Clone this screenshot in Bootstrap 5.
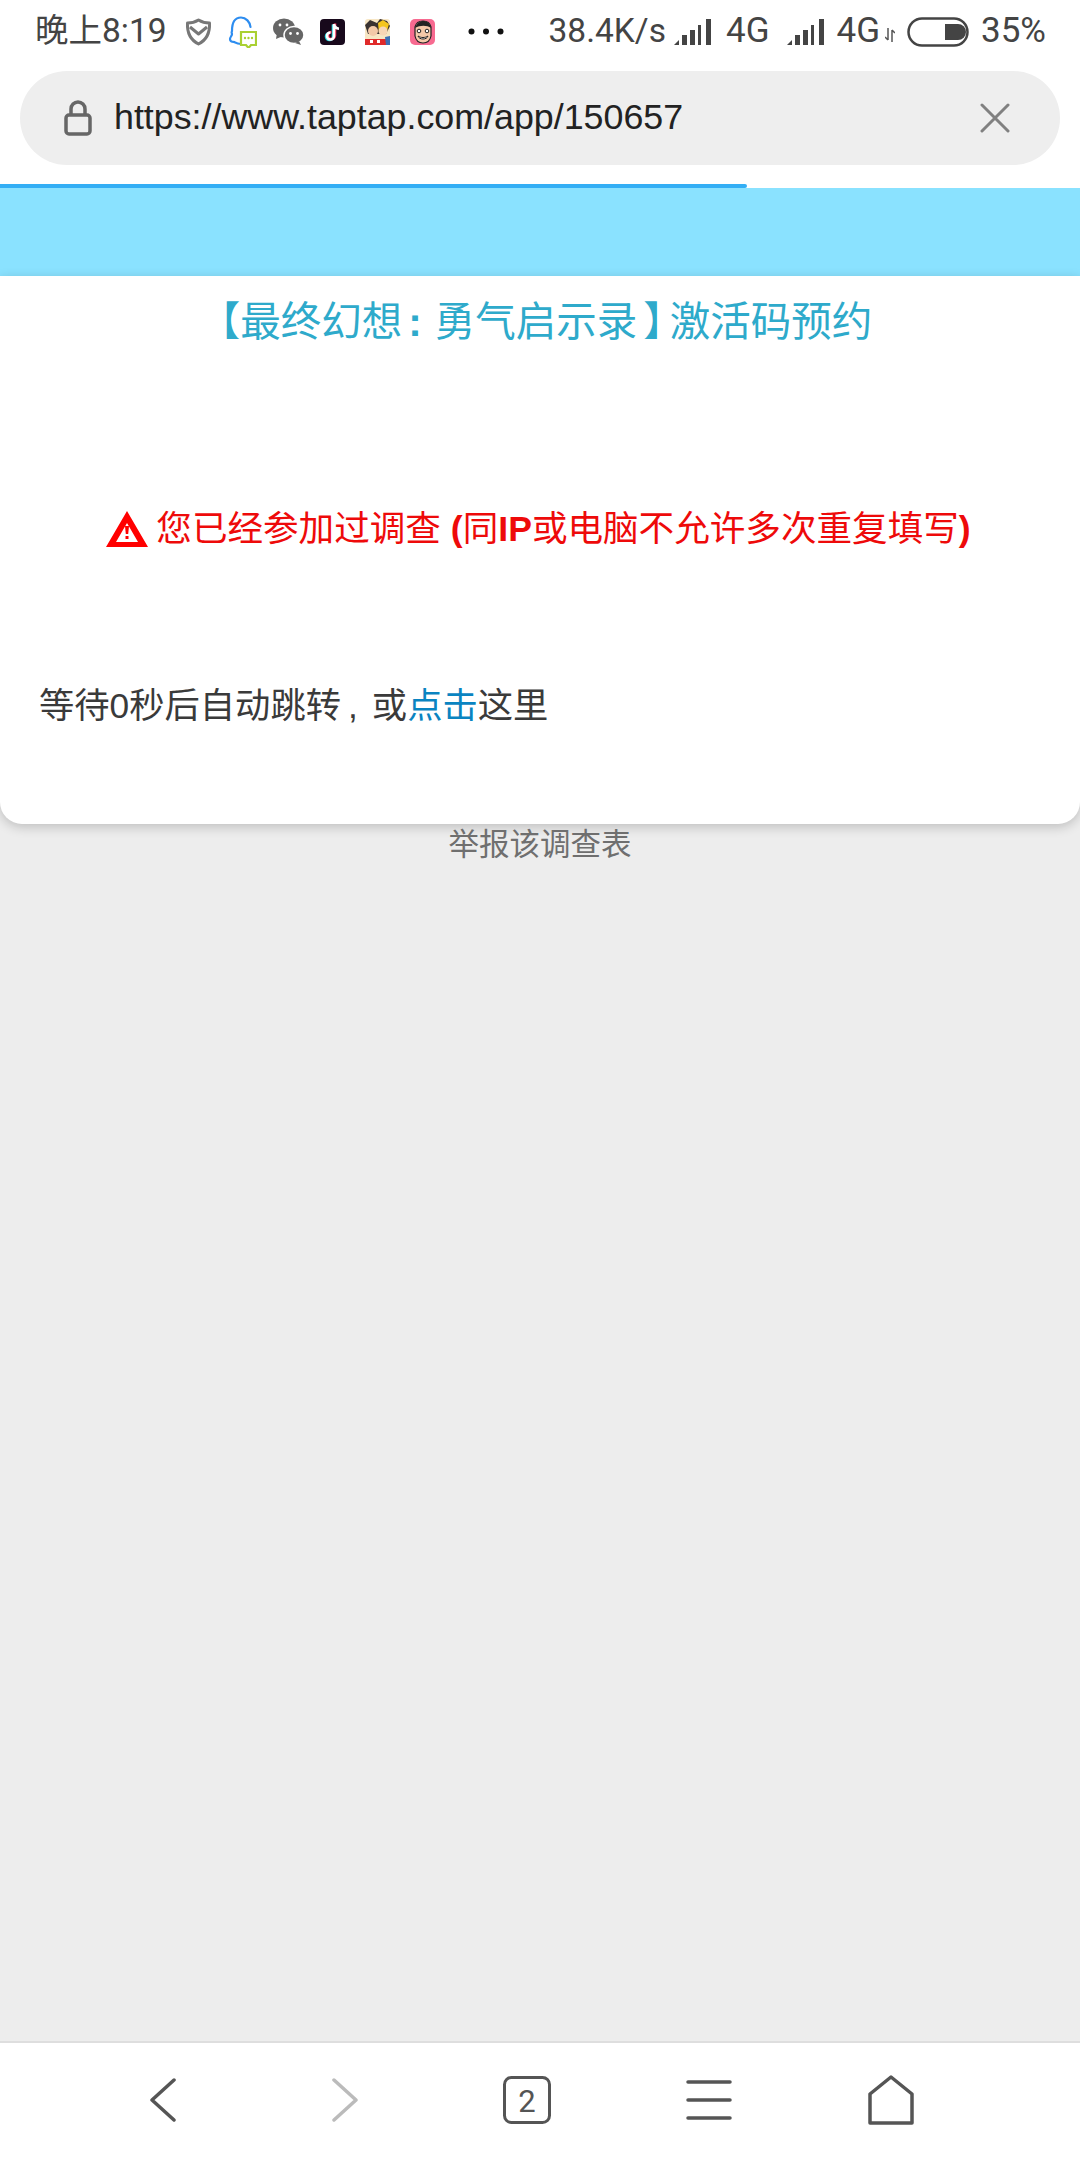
<!DOCTYPE html>
<html lang="zh-CN">
	<head>
		<meta charset="UTF-8" />
		<meta name="viewport" content="width=device-width, initial-scale=1.0" />
		<title>激活码预约</title>
		<link href="https://cdn.jsdelivr.net/npm/bootstrap@5.3.0/dist/css/bootstrap.min.css" rel="stylesheet" />
		<style>
			body {
				margin: 0;
				height: 2160px;
				background: #ededed;
				font-family: "Liberation Sans", "Noto Sans CJK SC", sans-serif;
			}
			.phone-page {
				height: 2160px;
			}
			.status-strip {
				height: 63px;
				padding: 0 34px 0 35px;
				background: #fff;
				color: #444;
				font-family: Roboto, "Noto Sans CJK SC", sans-serif;
				font-size: 33.5px;
				white-space: nowrap;
			}
			.status-left {
				gap: 16px;
			}
			.status-time {
				margin-right: 2px;
			}
			.status-dots {
				margin-left: 17px;
			}
			.status-right {
				font-size: 35px;
			}
			.status-speed {
				margin-right: 8px;
				font-size: 33.5px;
			}
			.status-signal {
				margin-right: 14px;
			}
			.status-signal-2 {
				margin: 0 12px 0 17px;
			}
			.status-net {
				margin: 0 12px 16px 5px;
			}
			.status-batt {
				margin-right: 12px;
			}
			.url-wrap {
				height: 121px;
				padding: 8px 20px 0;
				background: #fff;
			}
			.url-pill {
				height: 94px;
				padding: 0 50px 0 44px;
				border-radius: 47px;
				background: #eee;
				color: #222;
				font-size: 35.8px;
			}
			.url-text {
				margin-left: 22px;
			}
			.load-track {
				height: 4px;
				background: #fff;
			}
			.load-fill {
				width: 747px;
				height: 4px;
				background: #33aef5;
				border-radius: 0 2px 2px 0;
			}
			.sky-band {
				height: 88px;
				background: #8ae2ff;
			}
			.result-panel {
				height: 548px;
				padding: 20px 39px 0;
				background: #fff;
				border-radius: 0 0 22px 22px;
				box-shadow: 0 3px 12px rgba(0, 0, 0, 0.2);
			}
			.survey-title {
				height: 52px;
				margin: 0;
				padding-right: 8px;
				color: #2eaacb;
				font-size: 40.5px;
				font-weight: 400;
				line-height: 52px;
				text-align: center;
				white-space: nowrap;
			}
			.title-colon {
				margin: 0 13px 0 6px;
				font-weight: 700;
			}
			.title-close {
				margin-left: 6px;
				letter-spacing: -14px;
			}
			.warn-line {
				height: 50px;
				margin-top: 156px;
				padding-right: 3px;
				color: #ee0a0a;
				font-size: 35.6px;
				line-height: 50px;
				white-space: nowrap;
			}
			.warn-line svg {
				margin-right: 8px;
			}
			.wait-line {
				margin-top: 127px;
				color: #3a3a3a;
				font-size: 35.3px;
				line-height: 50px;
				white-space: nowrap;
			}
			.wait-line a {
				color: #0a84c1;
				text-decoration: none;
			}
			.wait-comma {
				margin: 0 14px 0 7px;
			}
			.report-line {
				color: #6f6f6f;
				font-size: 30.5px;
				line-height: 40px;
				text-align: center;
			}
			.tool-strip {
				height: 119px;
				padding: 0 98px 3px 72px;
				background: #fff;
				border-top: 2px solid #dedede;
			}
			.tool-slot {
				width: 182px;
			}
		</style>
	</head>
	<body>
		<div class="phone-page d-flex flex-column">
			<div class="status-strip d-flex align-items-center justify-content-between">
				<div class="status-left d-flex align-items-center">
					<span class="status-time">晚上8:19</span>
					<svg width="27" height="28" viewBox="0 0 27 28" fill="none" stroke="#777" stroke-width="3" stroke-linejoin="round"><path d="M13.500 2c4 2.500 8 3 11 3 .5 10-3 17-11 21C5.500 22 2 15 2.500 5c3 0 7-.5 11-3z" /><path d="M5 9l8.500 7L22 9" /></svg>
					<svg width="29" height="32" viewBox="0 0 29 32" fill="none"><path d="M6 26c-2 0-4-1-4-3 0-2 2-3 2-5 0-1-1-1 0-3C4 6 7 1.500 13 1.500 18 1.500 22 6 22.500 11" stroke="#2d8df0" stroke-width="2.200" stroke-linecap="round" /><path d="M6 26c2 1 4 2 7 2" stroke="#2d8df0" stroke-width="2.200" stroke-linecap="round" /><path d="M13 16h15v13h-5l-2.500 3-2.500-3h-5z" fill="#fff" stroke="#a9d032" stroke-width="2.200" /><circle cx="17" cy="22" r="1.200" fill="#a9d032" /><circle cx="20.500" cy="22" r="1.200" fill="#a9d032" /><circle cx="24" cy="22" r="1.200" fill="#a9d032" /></svg>
					<svg width="31" height="27" viewBox="0 0 31 27"><ellipse cx="11" cy="10" rx="11" ry="9.500" fill="#666" /><path d="M4 15l-1 6 7-3z" fill="#666" /><ellipse cx="21" cy="17" rx="10" ry="8.500" fill="#666" stroke="#fff" stroke-width="1.500" /><path d="M26 23l2 4-6-2z" fill="#666" /><circle cx="17.500" cy="15.500" r="1.400" fill="#fff" /><circle cx="24.500" cy="15.500" r="1.400" fill="#fff" /><circle cx="7" cy="7" r="1.400" fill="#fff" /><circle cx="14" cy="7" r="1.400" fill="#fff" /></svg>
					<svg width="25" height="26" viewBox="0 0 25 26"><rect width="25" height="26" rx="4" fill="#18091c" /><path d="M14 5v12a3.500 3.500 0 1 1-3.500-3.500" fill="none" stroke="#28d8e0" stroke-width="2.600" transform="translate(-1 .5)" /><path d="M14 5v12a3.500 3.500 0 1 1-3.500-3.500" fill="none" stroke="#f02a55" stroke-width="2.600" transform="translate(1 -.5)" /><path d="M14 5v12a3.500 3.500 0 1 1-3.500-3.500M14 5c.5 3 2.500 4.500 5 4.700" fill="none" stroke="#fff" stroke-width="2.600" /></svg>
					<svg class="ms-1" width="25" height="26" viewBox="0 0 25 26"><rect width="25" height="26" rx="3" fill="#f7e6c4" /><path d="M0 6l5-5 7 3 3-4 7 2 3 5-4 8H3z" fill="#3a3230" /><path d="M13 4l5-3 6 4-2 7-8 2z" fill="#f5c51e" /><circle cx="8" cy="12" r="5" fill="#f3c9a8" /><circle cx="18" cy="12" r="4.500" fill="#f8d6b6" /><path d="M0 20h25v6H0z" fill="#e02a2a" /><path d="M5 21h3v3H5zM12 21h3v3h-3z" fill="#fff" /><path d="M20 18l5-1v9h-4z" fill="#3c6fb4" /></svg>
					<svg class="ms-1" width="25" height="26" viewBox="0 0 25 26"><rect width="25" height="26" rx="5" fill="#f76a90" /><path d="M5 8c1-4 4-6 8-6s7 2 8 6v9c-1 5-4 7-8 7s-7-2-8-7z" fill="#f4c9a9" stroke="#222" stroke-width="1.200" /><path d="M5 9c2-5 5-7 8-7 4 0 7 2 8 7-4-3-11-3-16 0z" fill="#222" /><circle cx="9" cy="12" r="1.800" fill="#fff" stroke="#222" /><circle cx="17" cy="12" r="1.800" fill="#fff" stroke="#222" /><path d="M8 17c3 2 7 2 10 0-1 4-9 4-10 0z" fill="#fff" stroke="#222" /></svg>
					<svg class="status-dots" width="36" height="7" viewBox="0 0 36 7" fill="#111"><circle cx="3.500" cy="3.500" r="3" /><circle cx="18" cy="3.500" r="3" /><circle cx="32.500" cy="3.500" r="3" /></svg>
				</div>
				<div class="status-right d-flex align-items-center">
					<span class="status-speed">38.4K/s</span>
					<svg class="status-signal" width="38" height="28" viewBox="0 0 38 28" fill="#444"><path d="M0 27l5-5v5z" /><rect x="8" y="17" width="5" height="10" /><rect x="16" y="12" width="5" height="15" /><rect x="24" y="7" width="3" height="20" /><rect x="32" y="1" width="5" height="26" /></svg>
					<span>4G</span>
					<svg class="status-signal-2" width="38" height="28" viewBox="0 0 38 28" fill="#444"><path d="M0 27l5-5v5z" /><rect x="8" y="17" width="5" height="10" /><rect x="16" y="12" width="5" height="15" /><rect x="24" y="7" width="3" height="20" /><rect x="32" y="1" width="5" height="26" /></svg>
					<span>4G</span>
					<svg class="status-net align-self-end" width="10" height="14" viewBox="0 0 10 14" fill="none" stroke="#555" stroke-width="1.500"><path d="M3 0v12M0 9l3 3M7 2v12M7 2l3 3" /></svg>
					<svg class="status-batt" width="62" height="30" viewBox="0 0 62 30"><rect x="1.500" y="1.500" width="59" height="27" rx="13.500" fill="none" stroke="#444" stroke-width="2.500" /><path d="M38 7h13a8 8 0 0 1 0 16H38z" fill="#444" /></svg>
					<span>35%</span>
				</div>
			</div>

			<div class="url-wrap">
				<div class="url-pill d-flex align-items-center">
					<svg width="28" height="36" viewBox="0 0 28 36" fill="none" stroke="#666" stroke-width="3.500" stroke-linejoin="round"><path d="M7 15V9a7 7 0 0 1 14 0v6" /><rect x="2" y="15" width="24" height="19" rx="3" /></svg>
					<span class="url-text flex-grow-1">https://www.taptap.com/app/150657</span>
					<svg width="30" height="30" viewBox="0 0 30 30" stroke="#808080" stroke-width="3" stroke-linecap="round"><path d="M2 2l26 26M28 2L2 28" /></svg>
				</div>
			</div>

			<div class="load-track"><div class="load-fill"></div></div>
			<div class="sky-band"></div>

			<div class="result-panel">
				<h1 class="survey-title">【最终幻想<span class="title-colon">:</span>勇气启示录<span class="title-close">】</span>激活码预约</h1>
				<div class="warn-line d-flex align-items-center justify-content-center">
					<svg width="42" height="36" viewBox="0 0 42 36"><path fill-rule="evenodd" d="M21 0l21 36H0zM21 12L10 31h22z" fill="#f00" /><path d="M19 15h4l-.8 8h-2.400zM19.500 25h3v3h-3z" fill="#f00" /></svg>
					<span>您已经参加过调查 <b>(</b>同<b>IP</b>或电脑不允许多次重复填写<b>)</b></span>
				</div>
				<div class="wait-line">等待0秒后自动跳转<span class="wait-comma">,</span>或<a href="#">点击</a>这里</div>
			</div>

			<div class="report-line">举报该调查表</div>

			<div class="tool-strip mt-auto d-flex align-items-center">
				<div class="tool-slot d-flex justify-content-center">
					<svg width="26" height="44" viewBox="0 0 26 44" fill="none" stroke="#555" stroke-width="3.500" stroke-linecap="round" stroke-linejoin="round"><path d="M24 2L2 22l22 20" /></svg>
				</div>
				<div class="tool-slot d-flex justify-content-center">
					<svg width="26" height="44" viewBox="0 0 26 44" fill="none" stroke="#bbb" stroke-width="3.500" stroke-linecap="round" stroke-linejoin="round"><path d="M2 2l22 20L2 42" /></svg>
				</div>
				<div class="tool-slot d-flex justify-content-center">
					<svg width="48" height="48" viewBox="0 0 48 48" fill="none"><rect x="1.500" y="1.500" width="45" height="45" rx="7" stroke="#555" stroke-width="3" /><text x="24" y="36" text-anchor="middle" font-family="Roboto, sans-serif" font-size="31" fill="#555">2</text></svg>
				</div>
				<div class="tool-slot d-flex justify-content-center">
					<svg width="46" height="40" viewBox="0 0 46 40" stroke="#555" stroke-width="3.500" stroke-linecap="round"><path d="M2 2h42M2 20h42M2 38h42" /></svg>
				</div>
				<div class="tool-slot d-flex justify-content-center">
					<svg width="46" height="50" viewBox="0 0 46 50" fill="none" stroke="#555" stroke-width="3.500" stroke-linejoin="round"><path d="M23 2L44 19v29H2V19z" /></svg>
				</div>
			</div>
		</div>
		<script src="https://cdn.jsdelivr.net/npm/bootstrap@5.3.0/dist/js/bootstrap.bundle.min.js"></script>
	</body>
</html>
